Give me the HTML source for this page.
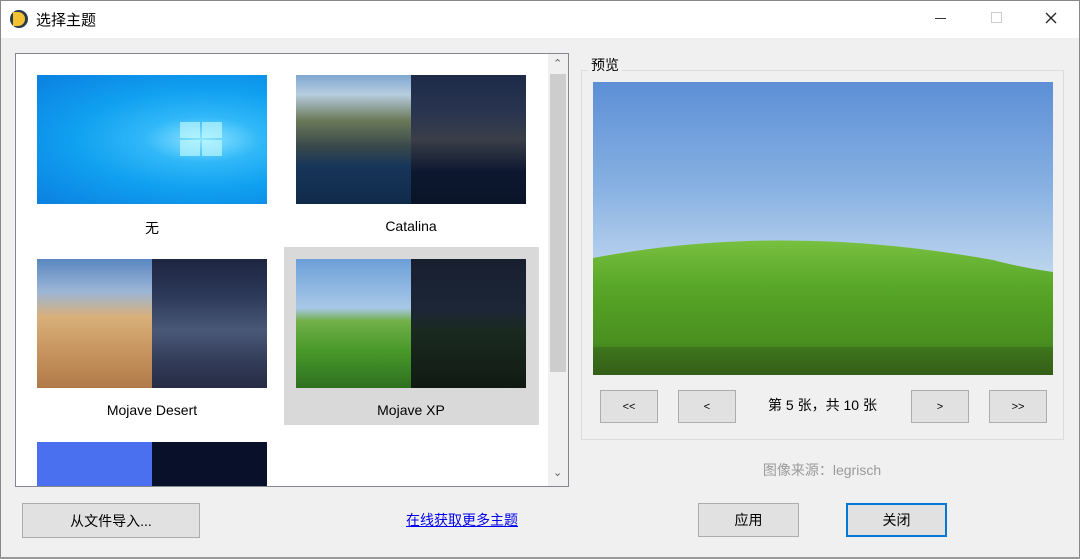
<!DOCTYPE html>
<html><head><meta charset="utf-8"><style>
*{margin:0;padding:0;box-sizing:border-box}
html,body{overflow:hidden}
body{width:1080px;height:559px;background:#f0f0f0;position:relative;font-family:"Liberation Sans","Noto Sans CJK SC",sans-serif;font-size:14px;color:#000}
.a{position:absolute}
.btn{position:absolute;background:#e1e1e1;border:1px solid #adadad;display:flex;align-items:center;justify-content:center;font-size:14px}
.lbl{position:absolute;width:230px;text-align:center;font-size:14px}
</style></head><body>
<div class="a" style="left:0;top:0;width:1080px;height:38px;background:#fff;border-top:1px solid #888"></div>
<div class="a" style="left:10px;top:10px;width:18px;height:18px;border-radius:50%;background:#2b3a4a"></div>
<div class="a" style="left:13px;top:12px;width:12px;height:14px;border-radius:0 7px 7px 0;background:#f2c230"></div>
<div class="a" style="left:36px;top:9px;font-size:15px">选择主题</div>
<div class="a" style="left:935px;top:18px;width:11px;height:1px;background:#333"></div>
<div class="a" style="left:991px;top:12px;width:11px;height:11px;border:1px solid #ccc"></div>
<svg class="a" style="left:1045px;top:12px" width="12" height="12"><path d="M1 1L11 11M11 1L1 11" stroke="#222" stroke-width="1.3"/></svg>
<div class="a" style="left:1079px;top:0;width:1px;height:559px;background:#888"></div>
<div class="a" style="left:0;top:0;width:1px;height:559px;background:#888"></div>

<div class="a" style="left:15px;top:53px;width:554px;height:434px;background:#fff;border:1px solid #828790"></div>
<div class="a" style="left:548px;top:54px;width:20px;height:432px;background:#f0f0f0"></div>
<div class="a" style="left:550px;top:74px;width:16px;height:298px;background:#cdcdcd"></div>
<div class="a" style="left:553px;top:57px;font-size:11px;color:#606060">⌃</div>
<div class="a" style="left:553px;top:466px;font-size:11px;color:#606060">⌄</div>

<div class="a" style="left:37px;top:75px;width:230px;height:129px;background:radial-gradient(ellipse at 72% 50%,#8fe4ff 0%,#30b8f8 25%,#10a0f0 55%,#0a80e0 100%)"></div>
<div class="a" style="left:180px;top:122px;width:42px;height:34px;display:grid;grid-template-columns:1fr 1fr;gap:2px;opacity:.6"><i style="background:#cff"></i><i style="background:#cff"></i><i style="background:#cff"></i><i style="background:#cff"></i></div>
<div class="lbl" style="left:37px;top:218px">无</div>
<div class="a" style="left:296px;top:75px;width:115px;height:129px;background:linear-gradient(#7fa7d0 0%,#b7cde0 15%,#6b7a5a 35%,#3a4a4a 55%,#18365a 70%,#102a4a 100%)"></div>
<div class="a" style="left:411px;top:75px;width:115px;height:129px;background:linear-gradient(#1c2a48 0%,#2a3550 30%,#3a3e48 50%,#0d1830 75%,#0a1428 100%)"></div>
<div class="lbl" style="left:296px;top:218px">Catalina</div>

<div class="a" style="left:37px;top:259px;width:115px;height:129px;background:linear-gradient(#5a86c0 0%,#9bb6d6 25%,#d9b07a 45%,#c89660 70%,#b07a48 100%)"></div>
<div class="a" style="left:152px;top:259px;width:115px;height:129px;background:linear-gradient(#1d2540 0%,#2e3a5a 30%,#4a5878 55%,#323c58 80%,#262c44 100%)"></div>
<div class="lbl" style="left:37px;top:402px">Mojave Desert</div>

<div class="a" style="left:284px;top:247px;width:255px;height:178px;background:#d9d9d9"></div>
<div class="a" style="left:296px;top:259px;width:115px;height:129px;background:linear-gradient(#6b9fd8 0%,#a8c8e8 38%,#72b04a 48%,#4a9a2a 70%,#2e7020 100%)"></div>
<div class="a" style="left:411px;top:259px;width:115px;height:129px;background:linear-gradient(#182030 0%,#1c2636 40%,#1a2a20 55%,#101a14 100%)"></div>
<div class="lbl" style="left:296px;top:402px">Mojave XP</div>

<div class="a" style="left:37px;top:442px;width:115px;height:44px;background:#4a70f0"></div>
<div class="a" style="left:152px;top:442px;width:115px;height:44px;background:#08102a"></div>

<div class="a" style="left:581px;top:70px;width:483px;height:370px;border:1px solid #dcdcdc"></div>
<div class="a" style="left:588px;top:55px;background:#f0f0f0;padding:0 3px">预览</div>
<svg class="a" style="left:593px;top:82px" width="460" height="293" viewBox="0 0 460 293">
<defs>
<linearGradient id="sky" x1="0" y1="0" x2="0" y2="1"><stop offset="0" stop-color="#5d8fd6"/><stop offset=".35" stop-color="#86b0e2"/><stop offset=".7" stop-color="#c6dbf0"/></linearGradient>
<linearGradient id="g1" x1="0" y1="0" x2="0" y2="1"><stop offset="0" stop-color="#78c040"/><stop offset=".35" stop-color="#58a628"/><stop offset=".75" stop-color="#4a9020"/><stop offset="1" stop-color="#325e16"/></linearGradient>
</defs>
<rect width="460" height="293" fill="url(#sky)"/>
<path d="M0 176 Q190 140 400 178 Q430 186 460 190 L460 293 L0 293Z" fill="url(#g1)"/>
<rect y="265" width="460" height="28" fill="#35601a" opacity=".45"/>
</svg>

<div class="btn" style="left:600px;top:390px;width:58px;height:33px;font-size:11px">&lt;&lt;</div>
<div class="btn" style="left:678px;top:390px;width:58px;height:33px;font-size:11px">&lt;</div>
<div class="a" style="left:740px;top:395px;width:165px;text-align:center">第 5 张，共 10 张</div>
<div class="btn" style="left:911px;top:390px;width:58px;height:33px;font-size:11px">&gt;</div>
<div class="btn" style="left:989px;top:390px;width:58px;height:33px;font-size:11px">&gt;&gt;</div>
<div class="a" style="left:722px;top:460px;width:200px;text-align:center;color:#9a9a9a">图像来源：legrisch</div>

<div class="btn" style="left:22px;top:503px;width:178px;height:35px">从文件导入...</div>
<div class="a" style="left:406px;top:510px;color:#0000ee;text-decoration:underline">在线获取更多主题</div>
<div class="btn" style="left:698px;top:503px;width:101px;height:34px">应用</div>
<div class="btn" style="left:846px;top:503px;width:101px;height:34px;border:2px solid #0078d7">关闭</div>
<div class="a" style="left:0;top:557px;width:1080px;height:2px;background:#999"></div>
</body></html>
